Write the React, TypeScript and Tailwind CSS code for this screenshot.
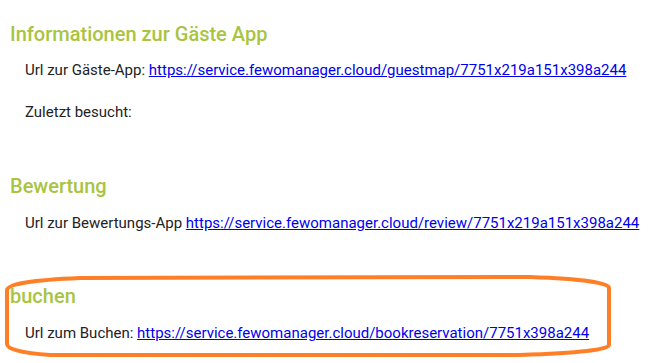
const SECTIONS = [
  {
    title: 'Informationen zur Gäste App',
    label: 'Url zur Gäste-App:',
    url: 'https://service.fewomanager.cloud/guestmap/7751x219a151x398a244',
  },
  {
    title: 'Bewertung',
    label: 'Url zur Bewertungs-App',
    url: 'https://service.fewomanager.cloud/review/7751x219a151x398a244',
  },
  {
    title: 'buchen',
    label: 'Url zum Buchen:',
    url: 'https://service.fewomanager.cloud/bookreservation/7751x398a244',
  },
];

export default function App() {
  return (
    <div className="relative w-[662px] h-[363px] overflow-hidden bg-white font-['Roboto',sans-serif] text-[#222]">
      {/* Abschnitt 1 */}
      <h2 className="ml-[10px] pt-[22px] text-[20px] leading-[24px] font-medium text-[#a9c43f]">
        {SECTIONS[0].title}
      </h2>
      <p className="ml-[25px] mt-[14px] text-[15px] leading-[20px]">
        {SECTIONS[0].label}{' '}
        <a href={SECTIONS[0].url} className="text-[#0000ee] underline">
          {SECTIONS[0].url}
        </a>
      </p>
      <p className="ml-[25px] mt-[22px] text-[15px] leading-[20px]">Zuletzt besucht:</p>

      {/* Abschnitt 2 */}
      <h2 className="ml-[10px] mt-[52px] text-[20px] leading-[24px] font-medium text-[#a9c43f]">
        {SECTIONS[1].title}
      </h2>
      <p className="ml-[25px] mt-[15px] text-[15px] leading-[20px]">
        {SECTIONS[1].label}{' '}
        <a href={SECTIONS[1].url} className="text-[#0000ee] underline">
          {SECTIONS[1].url}
        </a>
      </p>

      {/* Abschnitt 3 */}
      <h2 className="ml-[10px] mt-[51px] text-[20px] leading-[24px] font-medium text-[#a9c43f]">
        {SECTIONS[2].title}
      </h2>
      <p className="ml-[25px] mt-[15px] text-[15px] leading-[20px]">
        {SECTIONS[2].label}{' '}
        <a href={SECTIONS[2].url} className="text-[#0000ee] underline">
          {SECTIONS[2].url}
        </a>
      </p>

      {/* Markierung */}
      <svg className="absolute left-0 top-0 pointer-events-none" width="662" height="363">
        <path
          d="M 80 278 L 530 277 Q 609 280 609 288 L 609 345 Q 609 352 520 355 L 50 355 Q 7 352 7 344 L 7 290 Q 8 281 80 278 Z"
          fill="none"
          stroke="#ff7f27"
          strokeWidth="4"
        />
      </svg>
    </div>
  );
}
